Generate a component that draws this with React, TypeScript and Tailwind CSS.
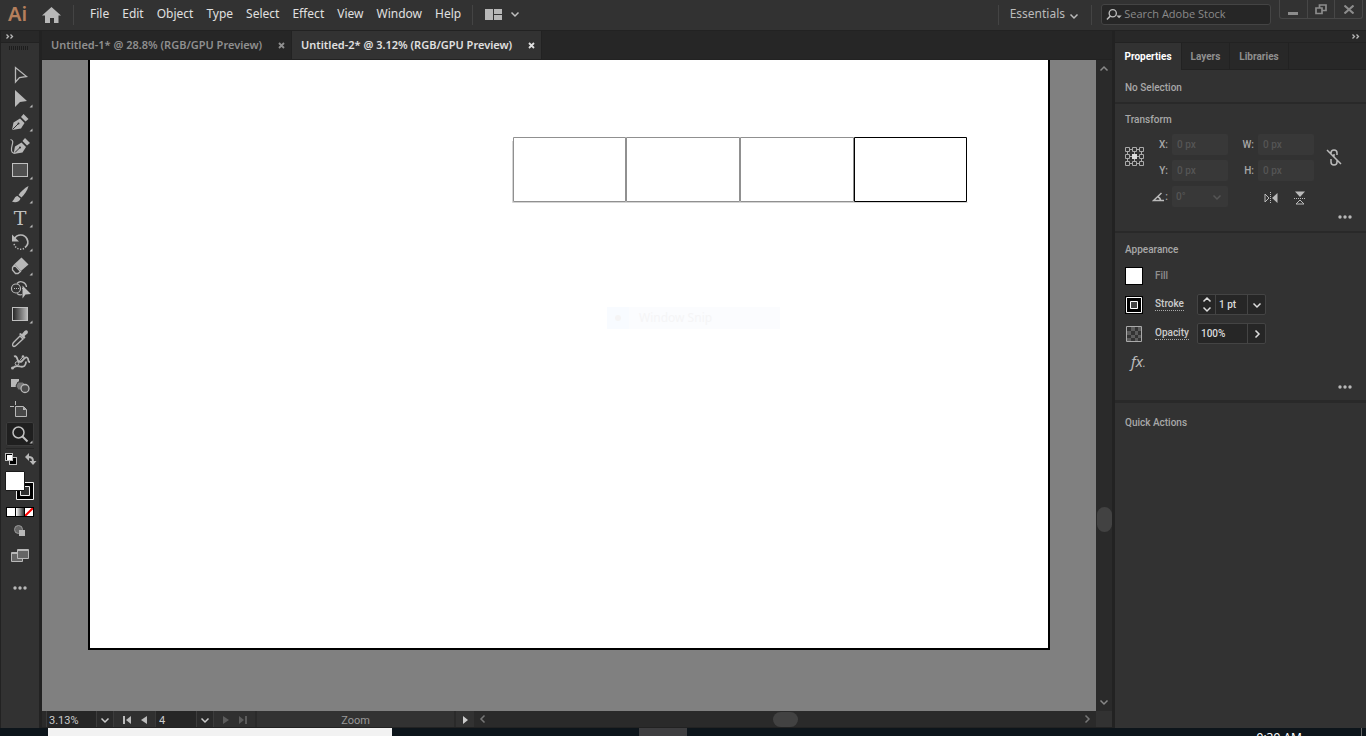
import type { ReactNode } from 'react';

const menus = ['File', 'Edit', 'Object', 'Type', 'Select', 'Effect', 'View', 'Window', 'Help'];

const nib = (
  <>
    <path d="M6 20 7.5 12.5 14 8.5 18.5 13 15 18.5z" fill="#b8b8b8" />
    <path d="M15 7 17.5 4 22.5 9 19.5 11.5z" fill="#b8b8b8" />
    <path d="M6.5 19.5 12 14" stroke="#323232" />
    <circle cx="12.5" cy="13.5" r="1" fill="#323232" />
  </>
);

type Tool = { name: string; art: ReactNode; more?: boolean };

const tools: Tool[] = [
  {
    name: 'Selection',
    art: <path d="M9.5 5.5v14.5l4-4.5 7-1z" stroke="#b8b8b8" strokeWidth="1.3" />,
  },
  { name: 'Direct Selection', more: true, art: <path d="M9 4v17l5-5 7-1z" fill="#b8b8b8" /> },
  { name: 'Pen', more: true, art: nib },
  {
    name: 'Curvature',
    art: (
      <>
        <g transform="translate(1.5 0)">{nib}</g>
        <path d="M4.5 5.5c5 1 0 7 1 11 .5 3 3 3 4 2" stroke="#b8b8b8" strokeWidth="1.2" />
      </>
    ),
  },
  {
    name: 'Rectangle',
    more: true,
    art: <rect x="6.5" y="5.5" width="15" height="13" fill="#505050" stroke="#c0c0c0" />,
  },
  {
    name: 'Paintbrush',
    more: true,
    art: (
      <>
        <path d="M22.5 4c-4 2-8 6-10 9l3 2.5c3-3 6-7 7-11.5z" fill="#b8b8b8" />
        <path d="M11.5 14c-3 0-3 4-5.5 5.5 3 1.5 8 .5 8.5-3z" fill="#b8b8b8" />
      </>
    ),
  },
  {
    name: 'Type',
    more: true,
    art: (
      <text x="14" y="19" textAnchor="middle" fill="#c0c0c0" className="font-['DejaVu_Serif',serif] text-[19px]">
        T
      </text>
    ),
  },
  {
    name: 'Rotate',
    more: true,
    art: (
      <>
        <path d="M8.5 8.5c3-5 10-4.5 12.5.5 1.5 3 .5 6.5-2 8.5" stroke="#b8b8b8" strokeWidth="1.7" />
        <path d="M6 4.5v7h7z" fill="#b8b8b8" />
        <path d="M18 18.5c-4 2-9 0-10-5" stroke="#b8b8b8" strokeWidth="1.5" strokeDasharray="1.3 1.5" />
      </>
    ),
  },
  {
    name: 'Eraser',
    more: true,
    art: (
      <>
        <path d="M15.5 3.5 22.5 10.5 15 17 8.5 10z" fill="#b8b8b8" />
        <path d="M8.5 11 6.5 13.5v2.5l3 3.5H12l2.5-2z" stroke="#b8b8b8" strokeWidth="1.3" />
      </>
    ),
  },
  {
    name: 'Shape Builder',
    art: (
      <>
        <circle cx="10" cy="10.5" r="4.5" stroke="#b8b8b8" strokeWidth="1.2" />
        <path d="M11 5.5c3-3.5 9-1.5 9.5 3.5M11 15.5c2 1.5 4 1.5 5 1" stroke="#b8b8b8" strokeWidth="1.3" />
        <path d="M8 10.5h9" stroke="#b8b8b8" strokeDasharray="1 1" />
        <path d="M16.5 7.5v13l3-4 5.5-.5z" fill="#c0c0c0" />
      </>
    ),
  },
  {
    name: 'Gradient',
    more: true,
    art: <rect x="6.5" y="5.5" width="15" height="13" fill="url(#ramp)" stroke="#c0c0c0" />,
  },
  {
    name: 'Eyedropper',
    art: (
      <>
        <path d="M7 20c-1-1 0-3 1-4l6-6 3 3-6.5 6c-1 1-2.5 2-3.5 1z" stroke="#b8b8b8" strokeWidth="1.4" />
        <path d="m13 8 1.5-1L16 8l2.5-3c2-2 4.5 0 3 2.5L18.5 10l1 1.5L18 13z" fill="#b8b8b8" />
      </>
    ),
  },
  {
    name: 'Puppet Warp',
    art: (
      <>
        <path
          d="M8 6.5c2-1 3 1 3.5 3S14 13 16 11s3-4.5 5-3.500c2.500 1 0 4.500 3 4.500"
          stroke="#b8b8b8"
          strokeWidth="1.8"
        />
        <path d="M7 18c2-3 5-2 7-1.500 4 1 6-1 6-5" stroke="#b8b8b8" strokeWidth="1.800" />
        <path d="m11 14 6-7.500" stroke="#b8b8b8" />
        <circle cx="6.5" cy="18" r="1.500" fill="#b8b8b8" />
        <circle cx="17" cy="6.5" r="1.300" fill="#b8b8b8" />
        <circle cx="11" cy="13.500" r="1.800" fill="#323232" stroke="#b8b8b8" />
      </>
    ),
  },
  {
    name: 'Blend',
    art: (
      <>
        <path d="M5 5h8v8H5z" fill="#b8b8b8" />
        <path d="M12 8h5l3 3-2 5h-6l-2-4z" fill="#777" stroke="#323232" />
        <circle cx="19" cy="14.5" r="4" fill="#4a4a4a" stroke="#b8b8b8" strokeWidth="1.3" />
      </>
    ),
  },
  {
    name: 'Artboard',
    art: (
      <>
        <path d="M9.5 3v4M4 8.5h4" stroke="#b8b8b8" />
        <path d="M9.5 8.5h8l3 3v7h-11z" fill="#484848" stroke="#b8b8b8" />
        <path d="M17 8.5V12h3.5z" fill="#b8b8b8" />
      </>
    ),
  },
  {
    name: 'Zoom',
    more: true,
    art: (
      <>
        <circle cx="12.5" cy="10.5" r="5.5" stroke="#c0c0c0" strokeWidth="1.5" />
        <path d="m16.5 14.500 5 5" stroke="#c0c0c0" strokeWidth="2" />
      </>
    ),
  },
];

function Chevron({ dir = 'down', className = '' }: { dir?: 'up' | 'down' | 'left' | 'right'; className?: string }) {
  const d = {
    down: 'M1.5 3.5 5 7l3.5-3.5',
    up: 'M1.5 6.5 5 3l3.5 3.5',
    left: 'M6.5 1.5 3 5l3.5 3.5',
    right: 'M3.5 1.5 7 5 3.5 8.5',
  }[dir];
  return (
    <svg width="10" height="10" viewBox="0 0 10 10" fill="none" className={className} aria-hidden>
      <path d={d} stroke="currentColor" strokeWidth="1.5" />
    </svg>
  );
}

function Dots() {
  return (
    <svg width="14" height="4" viewBox="0 0 14 4" fill="#b8b8b8" aria-hidden>
      <circle cx="2" cy="2" r="1.7" />
      <circle cx="7" cy="2" r="1.7" />
      <circle cx="12" cy="2" r="1.7" />
    </svg>
  );
}

function DoubleArrow() {
  return (
    <svg width="8" height="5" viewBox="0 0 8 5" fill="none" aria-hidden>
      <path d="m.5.5 2 2-2 2M4.5.5l2 2-2 2" stroke="#b8b8b8" strokeWidth="1.3" />
    </svg>
  );
}

function MenuBar() {
  return (
    <header className="flex h-[31px] shrink-0 items-start border-b border-[#222] bg-[#323232] text-xs text-[#e0e0e0]">
      <div className="w-[42px] pl-2 text-xl/[28px] font-semibold text-[#b57f5c]">Ai</div>
      <button aria-label="Home" className="mt-[7px] h-4">
        <svg width="19" height="16" viewBox="0 0 19 16" fill="#b8b8b8">
          <path d="M9.5 0 19 8.500h-2.500V16H12v-5H8v5H3V8.500H0z" />
        </svg>
      </button>
      <div className="mt-[5px] ml-3 h-5 w-px bg-[#444]" />
      <nav className="flex h-7 items-center gap-[13px] pl-4">
        {menus.map((m) => (
          <button key={m}>{m}</button>
        ))}
      </nav>
      <div className="mt-[5px] ml-[11px] h-5 w-px bg-[#444]" />
      <button aria-label="Arrange documents" className="mt-2 ml-3 flex h-3 items-center gap-2">
        <svg width="17" height="11" viewBox="0 0 17 11" fill="#b8b8b8">
          <path d="M0 0h8v11H0zM9 0h8v5H9zM9 6h8v5H9z" />
        </svg>
        <Chevron className="text-[#c0c0c0]" />
      </button>
      <div className="mt-[5px] ml-auto h-5 w-px bg-[#444]" />
      <button className="flex h-7 items-center gap-1 pr-3 pl-[11px] text-[#bbb]">
        Essentials
        <Chevron className="mt-1" />
      </button>
      <div className="mt-[5px] h-5 w-px bg-[#444]" />
      <label className="mt-1 ml-[9px] flex h-[21px] w-[170px] items-center rounded-[3px] border border-[#444] bg-[#262626] pl-1">
        <svg width="18" height="14" viewBox="0 0 18 14" fill="none" aria-hidden>
          <circle cx="7.5" cy="5" r="4" stroke="#bbb" strokeWidth="1.5" />
          <path d="M5 8 1 12" stroke="#bbb" strokeWidth="1.7" />
          <path d="M11.5 7.500h6L14.500 10.500z" fill="#bbb" />
        </svg>
        <input
          aria-label="Search Adobe Stock"
          placeholder="Search Adobe Stock"
          className="w-full min-w-0 bg-transparent pl-[2px] font-['Open_Sans',sans-serif] text-[11px] outline-none placeholder:text-[#8a8a8a]"
        />
      </label>
      <div className="mr-[3px] ml-2 flex h-[19px] w-[84px] divide-x divide-[#474747] rounded-b-[3px] border border-t-0 border-[#474747]">
        <button aria-label="Minimize" className="flex flex-1 items-center justify-center">
          <span className="mt-2 h-[3px] w-2.5 bg-[#8c8c8c]" />
        </button>
        <button aria-label="Restore" className="flex flex-1 items-center justify-center">
          <svg width="12" height="11" viewBox="0 0 12 11" fill="none" stroke="#8c8c8c" strokeWidth="1.7">
            <path d="M1 4h6v5.500H1z" />
            <path d="M4.500 4V1H11v5.500H7" />
          </svg>
        </button>
        <button aria-label="Close" className="flex flex-1 items-center justify-center">
          <svg width="10" height="9" viewBox="0 0 10 9" stroke="#8c8c8c" strokeWidth="2">
            <path d="m.5.5 9 8m0-8-9 8" />
          </svg>
        </button>
      </div>
    </header>
  );
}

function Toolbar() {
  return (
    <aside className="flex w-[42px] shrink-0 flex-col border-r-3 border-l border-[#222] bg-[#323232]">
      <div className="flex h-3 shrink-0 items-center border-b border-[#222] bg-[#282828] pl-[5px]">
        <DoubleArrow />
      </div>
      <div className="h-[19px] shrink-0 pt-[3px] pl-2">
        <svg width="20" height="4" viewBox="0 0 20 4" aria-hidden>
          <path d="M0 2h20" stroke="#1d1d1d" strokeWidth="4" strokeDasharray="1 1" />
        </svg>
      </div>
      <div className="flex flex-col items-start pl-[5px]">
        {tools.map((t) => (
          <button
            key={t.name}
            aria-label={t.name}
            className={`h-6 w-7 rounded-[2px] ${t.name === 'Zoom' ? 'bg-[#1f1f1f] ring-1 ring-[#3c3c3c] ring-inset' : ''}`}
          >
            <svg width="28" height="24" viewBox="0 0 28 24" fill="none">
              <defs>
                <linearGradient id="ramp">
                  <stop offset="0" stopColor="#222" />
                  <stop offset="1" stopColor="#bbb" />
                </linearGradient>
              </defs>
              {t.art}
              {t.more && <path d="M26.500 18.500v3h-3z" fill="#b8b8b8" />}
            </svg>
          </button>
        ))}
      </div>
      <div className="mx-[5px] mt-[2px] h-px shrink-0 bg-[#262626]" />
      <div className="flex shrink-0 justify-between pt-1 pr-[2px] pl-1">
        <button aria-label="Default fill and stroke">
          <svg width="12" height="12" viewBox="0 0 12 12">
            <path d="M4 4h8v8H4z" fill="#c0c0c0" />
            <path d="M5 5h6v6H5z" />
            <path d="M0 0h8v8H0z" fill="#c0c0c0" />
            <path d="M1 1h6v6H1z" />
            <path d="M2 2h5v5H2z" fill="#fff" />
          </svg>
        </button>
        <button aria-label="Swap fill and stroke">
          <svg width="12" height="12" viewBox="0 0 12 12" fill="none">
            <path d="M3 4c4 0 5 1 5 5" stroke="#b8b8b8" strokeWidth="2" />
            <path d="M0 4 4 0v8zM4.500 8h7L8 12z" fill="#b8b8b8" />
          </svg>
        </button>
      </div>
      <button aria-label="Fill and stroke" className="mt-[6px] ml-1 shrink-0 self-start">
        <svg width="30" height="30" viewBox="0 0 30 30" fill="none">
          <path d="M11.5 11.5h17v17h-17z" fill="#000" stroke="#eee" />
          <path d="M15.5 15.5h9v9h-9z" fill="#323232" stroke="#eee" />
          <path d="M.5.5h19v19H.5z" fill="#fff" stroke="#1a1a1a" />
        </svg>
      </button>
      <div className="mt-[6px] ml-[5px] flex h-[10px] w-7 shrink-0 gap-px border border-black bg-black">
        <button aria-label="Color" className="flex-1 bg-white" />
        <button aria-label="Gradient fill" className="flex-1 bg-linear-to-r from-white to-[#333]" />
        <button aria-label="None" className="flex-1 bg-white">
          <svg viewBox="0 0 8 8" className="size-2" stroke="#f00" strokeWidth="2">
            <path d="M0 8 8 0" />
          </svg>
        </button>
      </div>
      <button aria-label="Drawing mode" className="mt-2 ml-[13px] self-start">
        <svg width="11" height="12" viewBox="0 0 11 12" fill="none">
          <circle cx="4.5" cy="4.5" r="4" fill="#666" stroke="#999" />
          <path d="M5 5h6v6H5z" fill="#b8b8b8" />
        </svg>
      </button>
      <button aria-label="Screen mode" className="mt-3 ml-[10px] self-start">
        <svg width="18" height="13" viewBox="0 0 18 13" fill="#666" stroke="#b8b8b8">
          <path d="M.5 3.5h11v9H.5zM.5 4.5h11" />
          <path d="M6.5.5h11v9h-11zM6.5 1.5h11" />
        </svg>
      </button>
      <button aria-label="Edit toolbar" className="mt-6 ml-3 self-start">
        <Dots />
      </button>
    </aside>
  );
}

function DocTab({ title, active }: { title: string; active?: boolean }) {
  return (
    <div
      className={`flex h-7 w-[250px] items-center justify-between border-r border-[#222] pr-[6px] pl-[9px] text-[11px] font-semibold whitespace-nowrap ${
        active ? 'bg-[#323232] text-[#e0e0e0]' : 'text-[#8f8f8f]'
      }`}
    >
      <button role="tab" aria-selected={!!active}>
        {title}
      </button>
      <button aria-label={`Close ${title}`}>
        <svg width="7" height="7" viewBox="0 0 7 7" stroke="currentColor" strokeWidth="1.8">
          <path d="m1 1 5 5m0-5-5 5" />
        </svg>
      </button>
    </div>
  );
}

function Canvas() {
  return (
    <div className="relative flex min-w-0 flex-1 flex-col bg-[#808080] px-[46px] pb-[61px]">
      <div className="flex-1 border-2 border-t-0 border-black bg-white" />
      <svg width="456" height="67" viewBox="0 0 456 67" fill="none" className="absolute top-[77px] left-[470px]">
        <path d="M.5 4v61.5h455" stroke="#d4d4d4" />
        <path d="M1.5.5h112v64h-112zM114.5.5h113v64h-113zM228.5.5h113v64h-113z" fill="#fff" stroke="#909090" />
        <path d="M342.5.5h112v64h-112z" fill="#fff" stroke="#000" />
      </svg>
      <div className="absolute top-[247px] left-[565px] flex h-[22px] w-[173px] items-center bg-[#fbfcfe] text-xs text-[#f5f5f6]">
        <span className="mr-[10px] flex size-[22px] items-center justify-center bg-[#f8fbff]">
          <span className="size-1.5 rounded-full bg-[#f5f4f5]" />
        </span>
        Window Snip
      </div>
    </div>
  );
}

function StatusBar() {
  return (
    <div className="flex h-[17px] shrink-0 border-b border-[#222] bg-[#2a2a2a] pl-1 font-['Roboto',sans-serif] text-[11px] text-[#ccc]">
      <input
        aria-label="Zoom level"
        defaultValue="3.13%"
        className="w-[50px] border-l border-[#3a3a3a] bg-[#262626] pt-1 pl-[2px]"
      />
      <button aria-label="Zoom presets" className="flex w-[18px] items-center justify-center border-x border-[#3c3c3c] pt-[2px]">
        <Chevron />
      </button>
      <div className="flex items-center gap-[9px] bg-[#303030] pr-2 pl-[9px] pt-px">
        <button aria-label="First artboard">
          <svg width="9" height="8" viewBox="0 0 9 8" fill="#bbb">
            <path d="M0 0h2v8H0zM8 0v8L3 4z" />
          </svg>
        </button>
        <button aria-label="Previous artboard">
          <svg width="6" height="8" viewBox="0 0 6 8" fill="#bbb">
            <path d="M6 0v8L0 4z" />
          </svg>
        </button>
      </div>
      <input
        aria-label="Artboard"
        defaultValue="4"
        className="w-[41px] border-l border-[#3a3a3a] bg-[#262626] pt-1 pl-[3px]"
      />
      <button aria-label="Artboard list" className="flex w-[18px] items-center justify-center border-x border-[#3c3c3c] pt-[2px]">
        <Chevron />
      </button>
      <div className="flex items-center gap-[9px] bg-[#303030] pr-2 pl-[9px] pt-px">
        <button aria-label="Next artboard" disabled>
          <svg width="6" height="8" viewBox="0 0 6 8" fill="#5c5c5c">
            <path d="M0 0v8l6-4z" />
          </svg>
        </button>
        <button aria-label="Last artboard" disabled>
          <svg width="9" height="8" viewBox="0 0 9 8" fill="#5c5c5c">
            <path d="M7 0h2v8H7zM1 0v8l5-4z" />
          </svg>
        </button>
      </div>
      <div className="w-[201px] border-x-2 border-[#2a2a2a] bg-[#323232] pt-[2px] text-center text-[#999]">Zoom</div>
      <button aria-label="Status menu" className="flex w-[18px] items-center justify-center bg-[#323232] pt-px">
        <svg width="5" height="8" viewBox="0 0 5 8" fill="#ccc">
          <path d="M0 0v8l5-4z" />
        </svg>
      </button>
      <div className="flex flex-1 items-center px-1 text-[#777]">
        <Chevron dir="left" />
        <div className="flex flex-1 justify-center">
          <div className="h-[15px] w-[25px] rounded-full bg-[#424242]" />
        </div>
        <Chevron dir="right" />
      </div>
      <div className="w-4 bg-[#323232]" />
    </div>
  );
}

function Field({ id, label }: { id: string; label: string }) {
  return (
    <>
      <label htmlFor={id} className="pr-1 text-right">
        {label}
      </label>
      <input id={id} disabled defaultValue="0 px" className="h-[21px] w-full rounded-[2px] bg-[#383838] pl-[5px] text-[#555]" />
    </>
  );
}

function Transform() {
  return (
    <section className="h-[127px] px-[10px] pt-2">
      <h2>Transform</h2>
      <div className="mt-[7px] flex">
        <svg width="20" height="20" viewBox="0 0 20 20" fill="none" stroke="#aaa" className="mt-[13px]">
          <path d="M5 2.5h2m5 0h2M5 9.5h2m5 0h2M5 16.5h2m5 0h2M2.5 5v2m0 5v2M9.5 5v2m0 5v2M16.5 5v2m0 5v2" />
          <path d="M.5.5h4v4h-4zM7.5.5h4v4h-4zM14.5.5h4v4h-4zM.5 7.5h4v4h-4zM14.5 7.5h4v4h-4zM.5 14.5h4v4h-4zM7.5 14.5h4v4h-4zM14.5 14.5h4v4h-4z" />
          <path d="M7 7h5v5H7z" fill="#ddd" stroke="none" />
        </svg>
        <div className="ml-1 grid grid-cols-[23px_56px_30px_56px] items-center gap-y-[5px]">
          <Field id="pos-x" label="X:" />
          <Field id="size-w" label="W:" />
          <Field id="pos-y" label="Y:" />
          <Field id="size-h" label="H:" />
          <label htmlFor="angle" className="flex items-center justify-end pr-1">
            <svg width="13" height="10" viewBox="0 0 13 10" fill="none" stroke="#bbb" strokeWidth="1.5" className="shrink-0">
              <path d="M9.5 1 1.5 8.500H12M5.500 4.500c2 1 3 2 3 4" />
            </svg>
            :
          </label>
          <div className="relative text-[#555]">
            <select id="angle" disabled className="h-[21px] w-full appearance-none rounded-[2px] bg-[#383838] pl-1">
              <option>0°</option>
            </select>
            <Chevron className="absolute top-[6px] right-[6px]" />
          </div>
          <div className="col-span-2 flex items-center gap-4 pt-[2px] pl-9">
            <button aria-label="Flip horizontal">
              <svg width="14" height="12" viewBox="0 0 14 12" fill="none">
                <path d="M1 2v8l4-4z" stroke="#bbb" />
                <path d="M13.5 1v10L8 6z" fill="#bbb" />
                <path d="M6.5 0v12" stroke="#bbb" strokeDasharray="1 1" />
              </svg>
            </button>
            <button aria-label="Flip vertical">
              <svg width="12" height="14" viewBox="0 0 12 14" fill="none">
                <path d="M2 13h8L6 9z" stroke="#bbb" />
                <path d="M1 .5h10L6 6z" fill="#bbb" />
                <path d="M0 7.500h12" stroke="#bbb" strokeDasharray="1 1" />
              </svg>
            </button>
          </div>
        </div>
        <button aria-label="Constrain proportions" className="ml-3 self-start pt-[15px]">
          <svg width="16" height="17" viewBox="0 0 16 17" fill="none" stroke="#bbb" strokeWidth="1.5">
            <path d="M5 6V4c0-4 6-4 6 0v2M5 10v3c0 4 6 4 6 0v-2M8 5v3M1 1l14 14" />
          </svg>
        </button>
      </div>
      <div className="flex justify-end pt-[6px] pr-1">
        <button aria-label="More transform options" className="h-2">
          <Dots />
        </button>
      </div>
    </section>
  );
}

function Appearance() {
  return (
    <section className="h-[169px] border-t-2 border-[#292929] px-[10px] pt-[9px]">
      <h2>Appearance</h2>
      <div className="mt-[6px] grid grid-cols-[30px_42px_auto] items-center gap-y-1">
        <button aria-label="Fill color" className="size-[18px] border border-black bg-white" />
        <span className="leading-[25px] text-[#8f8f8f]">Fill</span>
        <span />
        <button aria-label="Stroke color">
          <svg width="18" height="18" viewBox="0 0 18 18" fill="none" stroke="#fff">
            <path d="M0 0h18v18H0z" fill="#000" stroke="none" />
            <path d="M1.5 1.5h15v15h-15z" />
            <path d="M5.5 5.5h7v7h-7z" fill="#444" />
          </svg>
        </button>
        <a href="#stroke" className="justify-self-start border-b border-dotted border-[#aaa] leading-3 text-[#ccc]">
          Stroke
        </a>
        <div className="my-[2px] flex h-[21px] divide-x divide-[#444] justify-self-start rounded-[2px] border border-[#444] bg-[#262626] text-[#ddd]">
          <div className="flex w-[18px] flex-col items-center justify-center">
            <button aria-label="Increase stroke" className="h-[9px]">
              <Chevron dir="up" />
            </button>
            <button aria-label="Decrease stroke" className="h-[10px]">
              <Chevron />
            </button>
          </div>
          <input aria-label="Stroke weight" defaultValue="1 pt" className="w-[32px] pl-[3px]" />
          <button aria-label="Stroke presets" className="flex w-[17px] items-center justify-center">
            <Chevron />
          </button>
        </div>
        <svg width="18" height="18" viewBox="0 0 18 18" fill="none">
          <path d="M1.5 1.5h15v15h-15z" fill="#333" stroke="#aaa" />
          <path d="M6 2h4v4H6zM13 2h3v4h-3zM2 6h4v4H2zM10 6h3v4h-3zM6 10h4v3H6zM13 10h3v3h-3zM2 13h4v3H2zM10 13h3v3h-3z" fill="#5c5c5c" />
        </svg>
        <a href="#opacity" className="justify-self-start border-b border-dotted border-[#aaa] leading-3 text-[#ccc]">
          Opacity
        </a>
        <div className="my-[2px] flex h-[21px] divide-x divide-[#444] justify-self-start rounded-[2px] border border-[#444] bg-[#262626] text-[#ddd]">
          <input aria-label="Opacity value" defaultValue="100%" className="w-[50px] pl-[3px]" />
          <button aria-label="Opacity slider" className="flex w-[17px] items-center justify-center">
            <Chevron dir="right" />
          </button>
        </div>
      </div>
      <button className="mt-[5px] ml-[6px] block font-['Noto_Sans',sans-serif] text-[15px]/[20px] font-normal text-[#bbb] italic">
        fx<span className="text-[10px]">.</span>
      </button>
      <div className="flex justify-end pt-[10px] pr-1">
        <button aria-label="More appearance options" className="h-2">
          <Dots />
        </button>
      </div>
    </section>
  );
}

function PropertiesPanel() {
  return (
    <aside className="flex w-[254px] shrink-0 flex-col border-l-3 border-[#222] bg-[#323232] font-['Roboto',sans-serif] text-[10px]/[15px] font-medium text-[#a8a8a8]">
      <div className="flex h-3 shrink-0 items-center justify-end border-b border-[#222] bg-[#282828] pr-[6px]">
        <DoubleArrow />
      </div>
      <div className="flex h-[27px] shrink-0 divide-x divide-[#222] bg-[#282828] font-bold" role="tablist">
        <button role="tab" aria-selected className="w-[67px] bg-[#323232] text-white">
          Properties
        </button>
        <button role="tab" className="w-12 border-b border-[#222] text-[#8f8f8f]">
          Layers
        </button>
        <button role="tab" className="w-[59px] border-b border-[#222] text-[#8f8f8f]">
          Libraries
        </button>
        <div className="flex-1 border-b border-[#222]" />
      </div>
      <div className="h-[34px] shrink-0 border-b-2 border-[#292929] px-[10px] pt-[10px]">No Selection</div>
      <Transform />
      <Appearance />
      <section className="border-t-3 border-[#292929] px-[10px] pt-3">
        <h2>Quick Actions</h2>
      </section>
    </aside>
  );
}

export default function App() {
  return (
    <div className="flex h-screen flex-col overflow-hidden bg-[#0d151b] font-['Noto_Sans',sans-serif]">
      <MenuBar />
      <div className="flex min-h-0 flex-1">
        <Toolbar />
        <main className="flex min-w-0 flex-1 flex-col">
          <div className="flex h-[29px] shrink-0 border-b border-[#222] bg-[#262626]" role="tablist">
            <DocTab title="Untitled-1* @ 28.8% (RGB/GPU Preview)" />
            <DocTab title="Untitled-2* @ 3.12% (RGB/GPU Preview)" active />
          </div>
          <div className="flex min-h-0 flex-1">
            <Canvas />
            <div className="flex w-4 flex-col items-center bg-[#2a2a2a] py-1 text-[#888]">
              <Chevron dir="up" />
              <div className="flex-[433]" />
              <div className="h-[25px] w-[15px] rounded-full bg-[#424242]" />
              <div className="flex-[165]" />
              <Chevron />
            </div>
          </div>
          <StatusBar />
        </main>
        <PropertiesPanel />
      </div>
      <footer className="flex h-2 shrink-0 overflow-hidden pl-12 text-xs text-white">
        <div className="w-[344px] bg-[#f2f2f2]" />
        <div className="ml-[247px] w-12 bg-[#3e3e40]" />
        <div className="mr-[59px] ml-auto pt-[2px]">9:39 AM</div>
        <div className="mr-1 w-px bg-[#666]" />
      </footer>
    </div>
  );
}
